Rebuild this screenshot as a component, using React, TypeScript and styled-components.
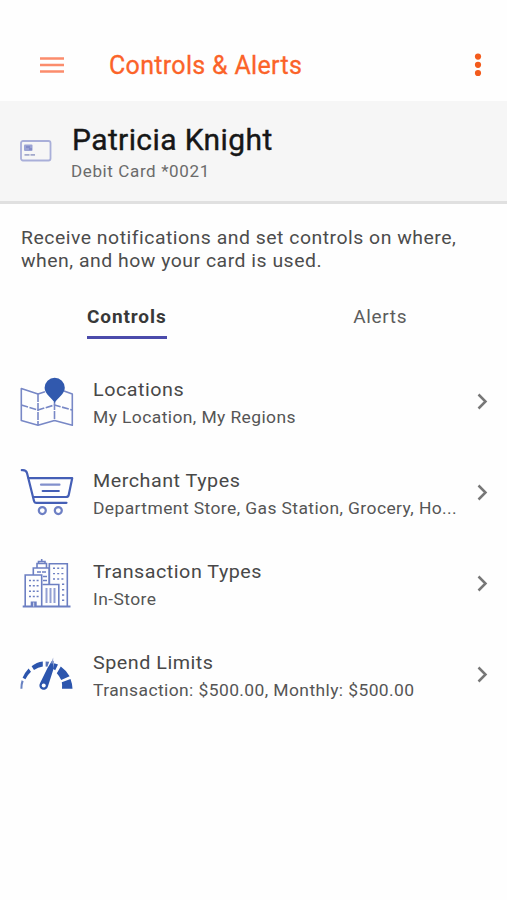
import React from "react";
import styled, { createGlobalStyle } from "styled-components";

const GlobalStyle = createGlobalStyle`
  * { box-sizing: border-box; }
  body { margin: 0; background: #fff; font-family: Roboto, "Liberation Sans", sans-serif; }
  h1, h2, h3, p { margin: 0; font-weight: 400; }
  button { border: 0; padding: 0; background: none; font: inherit; text-align: left; }
  svg { display: block; flex: none; }
`;

const Screen = styled.main`
  width: 507px;
  height: 900px;
  background: #fefefe;
  overflow: hidden;
`;

const AppBar = styled.header`
  height: 101px;
  padding: 29px 24px 0 39px;
  display: flex;
  align-items: center;
`;

const Title = styled.h1`
  flex: 1;
  margin-left: 43px;
  padding-top: 2px;
  font-size: 25px;
  line-height: 30px;
  -webkit-text-stroke: 0.3px #fb6329;
  letter-spacing: 0.32px;
  color: #fb6329;
`;

const CardHeader = styled.section`
  height: 103px;
  padding: 20px 20px 0;
  display: flex;
  gap: 20px;
  background: #f6f6f6;
  border-bottom: 3px solid #e0e0e0;
`;

const CardIconBox = styled.div`
  padding-top: 18px;
`;

const Name = styled.h2`
  font-size: 30px;
  line-height: 38px;
  letter-spacing: 0.4px;
  -webkit-text-stroke: 0.4px #171717;
  color: #171717;
`;

const CardNumber = styled.p`
  font-size: 17px;
  line-height: 24px;
  letter-spacing: 0.62px;
  margin-left: -1px;
  color: #6b6b6b;
`;

const Description = styled.p`
  padding: 22px 20px 0 21px;
  font-size: 19px;
  line-height: 23px;
  letter-spacing: 0.5px;
  transform: scaleX(1.021);
  transform-origin: 21px 0;
  color: #4c4c4c;
`;

const Tabs = styled.nav`
  display: grid;
  grid-template-columns: 1fr 1fr;
  justify-items: center;
  margin-top: 32px;
`;

const Tab = styled.button<{ $active?: boolean }>`
  height: 35px;
  padding-bottom: 7px;
  font-size: 19px;
  line-height: 25px;
  letter-spacing: ${(p) => (p.$active ? 0.9 : 0.65)}px;
  font-weight: ${(p) => (p.$active ? 700 : 400)};
  color: ${(p) => (p.$active ? "#383838" : "#5c5c5c")};
  border-bottom: 3px solid ${(p) => (p.$active ? "#4b4bab" : "transparent")};
`;

const List = styled.div`
  padding-top: 18px;
`;

const Row = styled.button`
  width: 100%;
  height: 91px;
  padding: 0 14px 0 20px;
  display: flex;
  align-items: center;
`;

const RowText = styled.div`
  flex: 1;
  min-width: 0;
  margin: 0 10px 0 17px;
`;

const RowTitle = styled.h3`
  padding-top: 1px;
  font-size: 19px;
  line-height: 28px;
  letter-spacing: 0.5px;
  transform: scaleX(1.038);
  transform-origin: 0 0;
  color: #484848;
`;

const RowDetail = styled.p`
  margin-top: -1px;
  font-size: 17px;
  line-height: 28px;
  letter-spacing: 0.4px;
  transform: scaleX(1.026);
  transform-origin: 0 0;
  color: #555;
  white-space: nowrap;
`;

const MenuIcon = () => (
  <svg width="27" height="18" viewBox="0 0 27 18" stroke="#fb8c6c" strokeWidth="2.5">
    <path d="M1 2.5h24M1 9h24M1 15.5h24" />
  </svg>
);

const MoreIcon = () => (
  <svg width="10" height="26" viewBox="0 0 10 26" fill="#f35b1c">
    <circle cx="5" cy="4.6" r="3.1" />
    <circle cx="5" cy="12.8" r="3.1" />
    <circle cx="5" cy="21" r="3.1" />
  </svg>
);

const CardIcon = () => (
  <svg width="32" height="23" viewBox="0 0 32 23" fill="none">
    <rect x="1" y="2" width="29.5" height="19.5" rx="2" stroke="#a9afd9" strokeWidth="1.8" />
    <rect x="4" y="5.5" width="8.5" height="6.5" rx="1" fill="#9ba3d4" />
    <path d="M6 8h4M9 10h3" stroke="#6f79bd" />
    <path d="M4.5 15.8h5m1 0h4.5" stroke="#a3a9cc" strokeWidth="1.8" />
  </svg>
);

const Chevron = () => (
  <svg width="20" height="24" viewBox="0 0 20 24" fill="none" stroke="#777" strokeWidth="2.5">
    <path d="M5.5 3.5l7 7-7 7" />
  </svg>
);

const MapIcon = () => (
  <svg width="56" height="56" viewBox="0 0 56 56" fill="none">
    <g stroke="#7888c6" strokeWidth="1.6" strokeLinejoin="round">
      <path d="M25 16.7L18 19L1.3 13.5V45.5L18 50.3L34.5 45.5L52.3 50.3V19L44 16" />
      <path d="M18 19v31.3M34.5 27v18.5" strokeDasharray="8 1" />
      <path d="M1.3 30l16.7 5 16.5-5 17.8 5" strokeDasharray="7 1.5" />
    </g>
    <path d="M34.7 28C31.8 23 24.6 19 24.6 12.8a10.1 10.1 0 0 1 20.2 0C44.8 19 37.6 23 34.7 28Z" fill="#3159ae" />
  </svg>
);

const CartIcon = () => (
  <svg width="56" height="56" viewBox="0 1 56 56" fill="none" stroke="#455fb6" strokeWidth="2.2" strokeLinecap="round" strokeLinejoin="round">
    <path d="M1.8 5.2Q6 4.7 7 8L14 36Q14.4 37.8 16 37.8H46.5" />
    <path d="M8.7 13.2H52.2L48.7 30Q48.3 32 46 32H13" />
    <path d="M21 19.7H39.5" stroke="#8290cc" />
    <path d="M22.7 26H38.8" />
    <circle cx="22.3" cy="45.6" r="3.5" stroke="#6d7fc4" />
    <circle cx="38.3" cy="45.6" r="3.5" stroke="#6d7fc4" />
  </svg>
);

const BuildingsIcon = () => (
  <svg width="56" height="56" viewBox="0 2 56 56" fill="none" stroke="#6c7fc2" strokeWidth="1.6">
    <path d="M2.7 51.5H50.5" strokeWidth="2" />
    <path d="M5.2 51V20H21.7V51M13.3 20V13H29.3V29M17 13V8.5H26.5V13M18.5 8.5V6.5H25V8.5M21.7 4V7" />
    <path d="M29.3 29V8.7H47.3V51M22.5 29.5H38.8V51" />
    <path d="M9 25.5h10M9 30.8h10M9 36.2h10M9 41.5h10" strokeWidth="1.4" strokeDasharray="2 1.8" />
    <path d="M33 13.3h11M33 18.6h11M33 24h11" strokeWidth="1.4" strokeDasharray="2 2.2" />
    <path d="M42 29.3h2.2M42 34.7h2.2M42 40h2.2M42 45.2h2.2" />
    <path d="M17 17h9M23 21.5h4M23 25.5h4" strokeDasharray="4 1" />
    <path d="M26.5 33V48M30.5 33V48M34.5 33V48" stroke="#93a0d3" strokeWidth="2" />
    <path d="M13.7 46.5v4.5" strokeWidth="6" />
    <path d="M13.7 47.5v4" stroke="#fefefe" strokeWidth="0.8" />
  </svg>
);

const GaugeIcon = () => (
  <svg width="56" height="56" viewBox="0 -2 56 56" fill="#2c55ad">
    <path d="M0.4 38.8Q0.3 34 1.6 30.2L3.6 31.2Q2.2 35 2.4 38.8Z" fill="#6882c2" />
    <path d="M2.6 27.7Q4.8 22.5 8.6 18.5L11 21.8Q7.5 25 5.4 29.2Z" />
    <path d="M11.6 16.2Q16.5 12.2 22.8 11.5V16.4Q18 17 14 20Z" />
    <path d="M25.6 11.5L29.2 11.8 27.4 16.8 25.6 16.4Z" fill="#5874b8" />
    <path d="M34.2 13.2L38 14.6 35.2 20.2 33 18.8Z" />
    <path d="M40.8 16.4Q46 20 49.6 26.3L41.2 30Q39.6 26.2 36.8 23.2Z" />
    <path d="M50.5 29Q52.3 33.5 52.5 38.8H42Q42.4 35.2 41.8 32.3Z" />
    <path d="M31.8 11L27.5 18 20 33.3A4.3 4.3 0 1 0 27.9 36.4L33.5 19V11Z" />
    <path d="M31 13.4L33.2 7.5V13.4Z" fill="#8397ca" />
    <circle cx="23.7" cy="35.4" r="2" fill="#fff" />
  </svg>
);

const rows = [
  { title: "Locations", detail: "My Location, My Regions", Icon: MapIcon },
  { title: "Merchant Types", detail: "Department Store, Gas Station, Grocery, Ho...", Icon: CartIcon },
  { title: "Transaction Types", detail: "In-Store", Icon: BuildingsIcon },
  { title: "Spend Limits", detail: "Transaction: $500.00, Monthly: $500.00", Icon: GaugeIcon },
];

export default function App() {
  return (
    <>
      <GlobalStyle />
      <Screen>
        <AppBar>
          <button aria-label="Menu"><MenuIcon /></button>
          <Title>Controls &amp; Alerts</Title>
          <button aria-label="More options"><MoreIcon /></button>
        </AppBar>
        <CardHeader>
          <CardIconBox><CardIcon /></CardIconBox>
          <div>
            <Name>Patricia Knight</Name>
            <CardNumber>Debit Card *0021</CardNumber>
          </div>
        </CardHeader>
        <Description>
          Receive notifications and set controls on where,<br />
          when, and how your card is used.
        </Description>
        <Tabs>
          <Tab $active>Controls</Tab>
          <Tab>Alerts</Tab>
        </Tabs>
        <List>
          {rows.map(({ title, detail, Icon }) => (
            <Row key={title}>
              <Icon />
              <RowText>
                <RowTitle>{title}</RowTitle>
                <RowDetail>{detail}</RowDetail>
              </RowText>
              <Chevron />
            </Row>
          ))}
        </List>
      </Screen>
    </>
  );
}
